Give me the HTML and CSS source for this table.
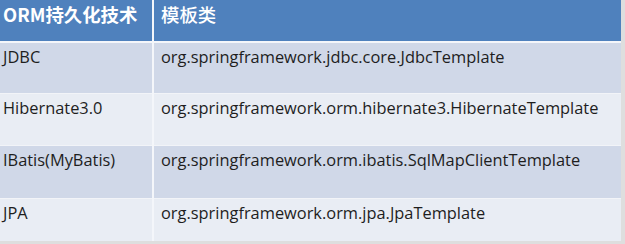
FILE: index.html
```html
<!DOCTYPE html>
<html lang="zh">
<head>
<meta charset="utf-8">
<link rel="stylesheet" href="styles.css">
</head>
<body>
<table class="orm">
  <thead>
    <tr><th class="c1">ORM持久化技术</th><th class="c2">模板类</th></tr>
  </thead>
  <tbody>
    <tr class="dark r1"><td>JDBC</td><td>org.springframework.jdbc.core.JdbcTemplate</td></tr>
    <tr class="light r2"><td>Hibernate3.0</td><td>org.springframework.orm.hibernate3.HibernateTemplate</td></tr>
    <tr class="dark r3"><td>IBatis(MyBatis)</td><td>org.springframework.orm.ibatis.SqlMapClientTemplate</td></tr>
    <tr class="light r4"><td>JPA</td><td>org.springframework.orm.jpa.JpaTemplate</td></tr>
  </tbody>
</table>
</body>
</html>
```
FILE: styles.css
```css
html, body {
  margin: 0;
  padding: 0;
  background: #dedede;
  width: 625px;
  height: 244px;
  overflow: hidden;
}
.orm {
  border-collapse: collapse;
  width: 621px;
  table-layout: fixed;
  font-family: "Open Sans", "Noto Sans CJK SC", sans-serif;
  font-size: 16.4px;
  line-height: 22px;
  color: #1e1e1e;
}
.orm th, .orm td {
  padding: 0 0 0 3px;
  text-align: left;
  vertical-align: top;
  border: 0;
}
.orm th.c1 { width: 149px; border-right: 2px solid #f4f6fa; }
.orm td:first-child { border-right: 2px solid #f4f6fa; }
.orm td:last-child, .orm th.c2 { padding-left: 7px; }
.orm thead tr {
  background: #4f81bd;
  height: 42px;
  border-bottom: 2px solid #f4f6fa;
}
.orm th {
  color: #ffffff;
  font-family: "Noto Sans CJK SC", sans-serif;
  font-weight: 700;
  font-size: 18.4px;
  line-height: 26px;
  padding-top: 1px;
  vertical-align: top;
}
.orm th.c2 { font-weight: 500; }
.orm td { padding-top: 3px; }
.dark { background: #d0d8e8; }
.light { background: #e9edf4; }
.r1 { height: 51px; border-bottom: 1px solid #f2f4f8; }
.r2 { height: 52px; border-bottom: 1px solid #f2f4f8; }
.r3 { height: 53px; border-bottom: 1px solid #f2f4f8; }
.r4 { height: 43px; }
```
